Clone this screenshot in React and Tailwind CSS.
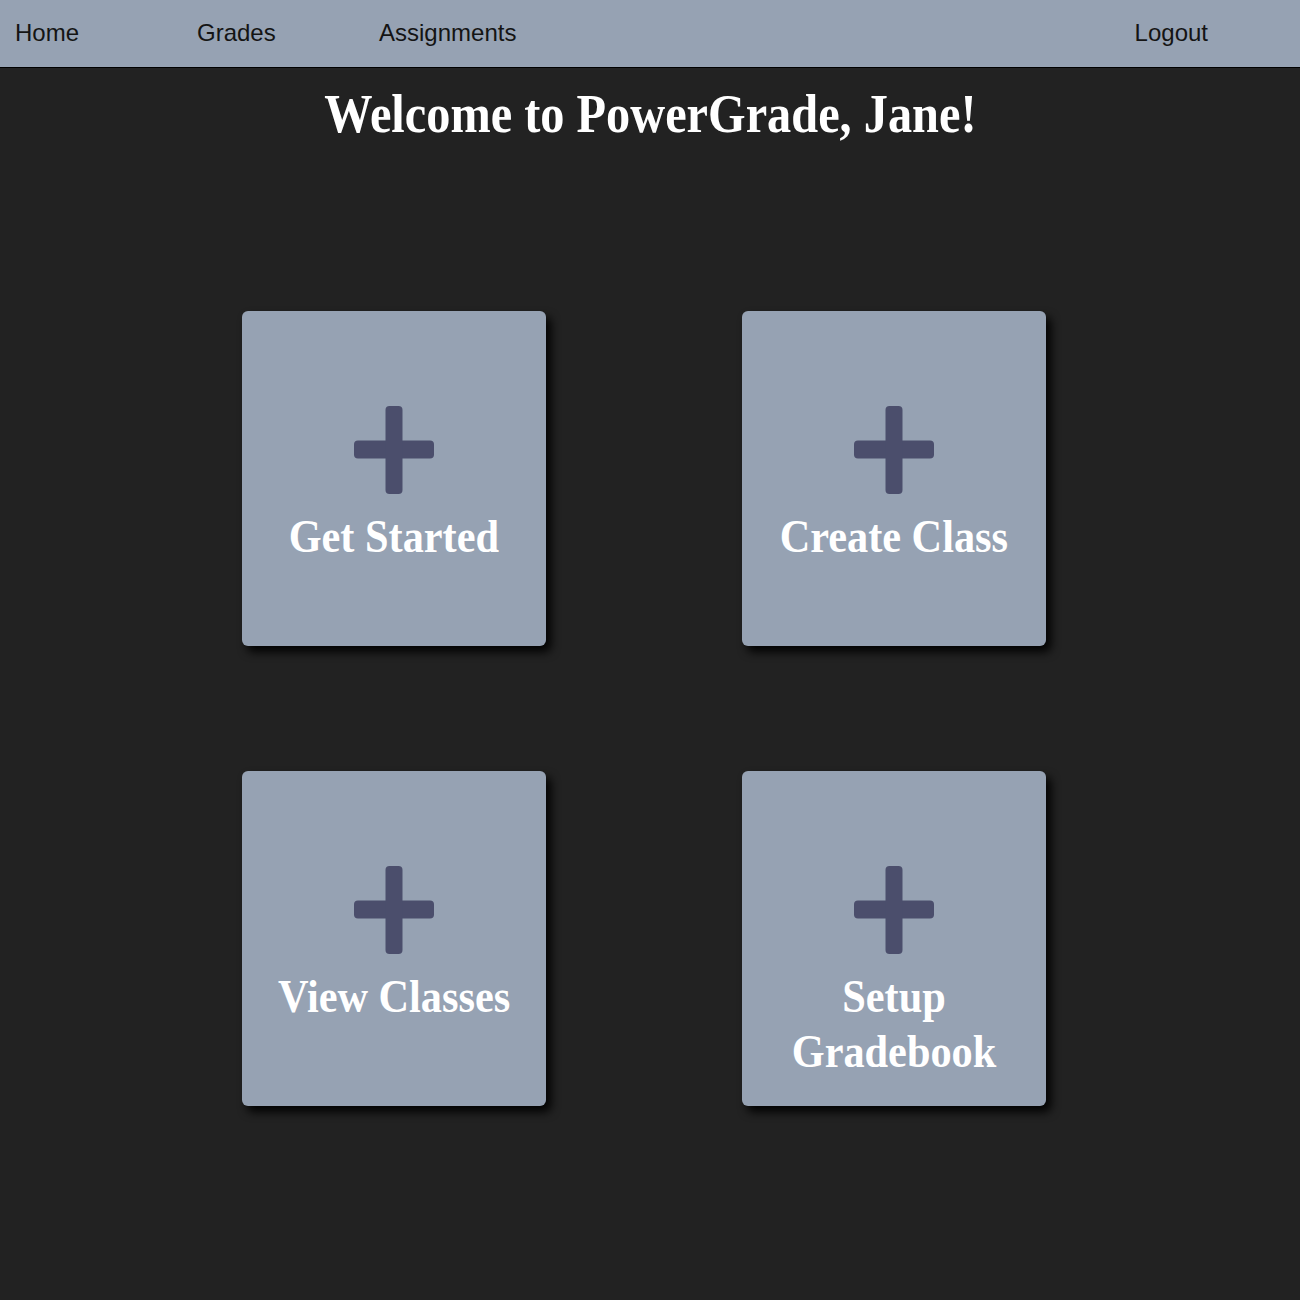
import React from 'react';

const navLinks = ['Home', 'Grades', 'Assignments'];

const tiles = ['Get Started', 'Create Class', 'View Classes', 'Setup Gradebook'];

const PlusIcon = () => (
    <svg width="80" height="88" viewBox="0 0 80 88" className="block">
        <rect x="0" y="34.5" width="80" height="18" rx="4" fill="#4b4e6c" />
        <rect x="31.5" y="0" width="17" height="88" rx="4" fill="#4b4e6c" />
    </svg>
);

const Tile = ({ label }) => (
    <div className="flex h-[335px] w-[304px] flex-col items-center rounded-[6px] bg-[#96a2b3] pt-[95px] shadow-[5px_6px_10px_rgba(0,0,0,0.95)]">
        <PlusIcon />
        <div className="mt-[15px] w-full px-2 text-center">
            <span className="inline-block scale-x-90 font-['Liberation_Serif',serif] text-[47px] font-bold leading-[55px] text-white">
                {label}
            </span>
        </div>
    </div>
);

const App = () => {
    return (
        <div className="min-h-screen bg-[#222222] font-['Liberation_Sans',Arial,sans-serif]">
            {/* top nav */}
            <nav className="flex h-[68px] items-center border-b border-black bg-[#96a2b3] pb-[2px] pl-[15px] pr-[92px] text-[24px] text-[#141414]">
                {navLinks.map((link) => (
                    <a key={link} href="#" className="w-[182px]">
                        {link}
                    </a>
                ))}
                <a href="#" className="ml-auto">Logout</a>
            </nav>

            <h1 className="mt-[19px] text-center leading-none">
                <span className="inline-block scale-x-[0.895] font-['Liberation_Serif',serif] text-[54px] font-bold text-white">
                    Welcome to PowerGrade, Jane!
                </span>
            </h1>

            <div className="mt-[170px] grid grid-cols-[304px_304px] gap-x-[196px] gap-y-[125px] pl-[242px] pb-[190px]">
                {tiles.map((t) => (
                    <Tile key={t} label={t} />
                ))}
            </div>
        </div>
    );
};

export default App;
